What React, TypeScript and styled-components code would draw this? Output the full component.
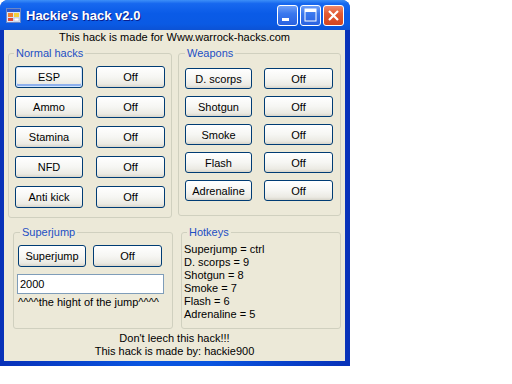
import { Fragment } from "react";
import styled, { createGlobalStyle } from "styled-components";

const GlobalStyle = createGlobalStyle`
  html, body {
    margin: 0;
    padding: 0;
    background: #ffffff;
  }
  body {
    font-family: "Liberation Sans", Arial, sans-serif;
    font-size: 11px;
    color: #000000;
  }
`;

const Window = styled.div`
  width: 350px;
  height: 366px;
  display: flex;
  flex-direction: column;
  border-radius: 8px 8px 0 0;
  overflow: hidden;
  background: #0a4fdc;
`;

const TitleBar = styled.div`
  height: 30px;
  flex: none;
  display: flex;
  align-items: center;
  padding: 0 6px 0 6px;
  background: linear-gradient(
    180deg,
    #3d8ff8 0%,
    #1768ef 12%,
    #0a5be7 45%,
    #0a5ae4 80%,
    #0c52d4 100%
  );
`;

const Title = styled.span`
  margin-left: 5px;
  font-family: "Liberation Sans", Arial, sans-serif;
  font-weight: bold;
  font-size: 13px;
  color: #ffffff;
  text-shadow: 1px 1px 0 #0a1e8c;
`;

const Caption = styled.div`
  margin-left: auto;
  display: flex;
  gap: 2px;
`;

const CaptionButton = styled.div<{ $close?: boolean }>`
  width: 21px;
  height: 21px;
  box-sizing: border-box;
  border: 1px solid #ffffff;
  border-radius: 3px;
  display: flex;
  align-items: center;
  justify-content: center;
  background: ${(p) =>
    p.$close
      ? "linear-gradient(180deg, #f08a6c 0%, #e25a33 40%, #d4451f 100%)"
      : "linear-gradient(180deg, #6f9ff7 0%, #3a78ee 40%, #2a62e0 100%)"};
`;

const Frame = styled.div`
  flex: 1;
  display: flex;
  padding: 0 5px 5px 4px;
  background: linear-gradient(90deg, #0831b8 0%, #0a55e0 40%, #0a55e0 60%, #0831b8 100%);
`;

const Client = styled.div`
  flex: 1;
  display: flex;
  flex-direction: column;
  background: #ece9d8;
  padding-top: 1px;
`;

const TopText = styled.div`
  text-align: center;
  line-height: 12px;
  height: 12px;
`;

const Row = styled.div<{ $top: number; $left: number; $gap: number }>`
  display: flex;
  align-items: flex-start;
  margin-top: ${(p) => p.$top}px;
  padding-left: ${(p) => p.$left}px;
  gap: ${(p) => p.$gap}px;
`;

const Group = styled.div<{ $w: number; $h: number }>`
  width: ${(p) => p.$w}px;
  height: ${(p) => p.$h}px;
  box-sizing: border-box;
  border: 1px solid #d0d0bf;
  border-radius: 3px;
  display: flex;
  flex-direction: column;
  align-items: flex-start;
`;

const Legend = styled.div<{ $x: number }>`
  margin: -7px 0 0 ${(p) => p.$x}px;
  padding: 0 2px;
  height: 13px;
  line-height: 13px;
  background: #ece9d8;
  color: #1d4fc4;
`;

const ButtonGrid = styled.div<{ $top: number; $left: number; $cols: string; $gap: number; $rowGap: number }>`
  display: grid;
  grid-template-columns: ${(p) => p.$cols};
  column-gap: ${(p) => p.$gap}px;
  row-gap: ${(p) => p.$rowGap}px;
  margin-top: ${(p) => p.$top}px;
  margin-left: ${(p) => p.$left}px;
`;

const XpButton = styled.button<{ $h: number; $focus?: boolean }>`
  height: ${(p) => p.$h}px;
  padding: 0;
  margin: 0;
  box-sizing: border-box;
  border: 1px solid #003c74;
  border-radius: 3px;
  font-family: "Liberation Sans", Arial, sans-serif;
  font-size: 11px;
  color: #000000;
  background: linear-gradient(180deg, #ffffff 0%, #f6f6f3 50%, #ebeae3 85%, #d8d5cb 100%);
  box-shadow: ${(p) =>
    p.$focus ? "inset 0 0 0 1px #cee3fc, inset 0 -2px 0 1px #8eb0ec" : "none"};
`;

const TextBox = styled.div`
  width: 147px;
  height: 20px;
  box-sizing: border-box;
  margin: 7px 0 0 3px;
  border: 1px solid #7f9db9;
  background: #ffffff;
  padding-left: 2px;
  line-height: 18px;
`;

const Hint = styled.div`
  margin: 2px 0 0 4px;
  line-height: 13px;
`;

const HotkeyList = styled.div`
  margin: 4px 0 0 2px;
  display: flex;
  flex-direction: column;
`;

const Line = styled.div`
  line-height: 13px;
  height: 13px;
`;

const Footer = styled.div`
  margin-top: 3px;
  text-align: center;
  line-height: 13px;
`;

const AppIcon = () => (
  <svg width="15" height="15" viewBox="0 0 15 15">
    <rect x="0.5" y="0.5" width="14" height="14" fill="#d8e4f8" stroke="#6d87c4" />
    <rect x="1" y="1" width="13" height="3" fill="#2c5bd0" />
    <rect x="2" y="5" width="5" height="4" fill="#f08030" />
    <rect x="8" y="5" width="5" height="4" fill="#f4d03c" />
    <rect x="2" y="10" width="5" height="3" fill="#e04838" />
    <rect x="8" y="10" width="5" height="3" fill="#ffffff" stroke="#9aa8c8" strokeWidth="0.5" />
  </svg>
);

const normalHacks = ["ESP", "Ammo", "Stamina", "NFD", "Anti kick"];
const weapons = ["D. scorps", "Shotgun", "Smoke", "Flash", "Adrenaline"];
const hotkeys = [
  "Superjump = ctrl",
  "D. scorps = 9",
  "Shotgun = 8",
  "Smoke = 7",
  "Flash = 6",
  "Adrenaline = 5",
];

const App = () => {
  return (
    <>
      <GlobalStyle />
      <Window>
        <TitleBar>
          <AppIcon />
          <Title>Hackie's hack v2.0</Title>
          <Caption>
            <CaptionButton>
              <svg width="19" height="19" viewBox="0 0 19 19">
                <rect x="4" y="12" width="7" height="3" fill="#ffffff" />
              </svg>
            </CaptionButton>
            <CaptionButton>
              <svg width="19" height="19" viewBox="0 0 19 19">
                <rect x="4" y="3" width="11" height="12" fill="none" stroke="#ffffff" strokeWidth="1" />
                <rect x="4" y="3" width="11" height="3" fill="#ffffff" />
              </svg>
            </CaptionButton>
            <CaptionButton $close>
              <svg width="19" height="19" viewBox="0 0 19 19">
                <path d="M5 5 L14 14 M14 5 L5 14" stroke="#ffffff" strokeWidth="2.2" />
              </svg>
            </CaptionButton>
          </Caption>
        </TitleBar>
        <Frame>
          <Client>
            <TopText>This hack is made for Www.warrock-hacks.com</TopText>
            <Row $top={10} $left={4} $gap={6}>
              <Group $w={164} $h={165}>
                <Legend $x={5}>Normal hacks</Legend>
                <ButtonGrid $top={6} $left={6} $cols="68px 69px" $gap={13} $rowGap={8}>
                  {normalHacks.map((name, i) => (
                    <Fragment key={name}>
                      <XpButton $h={22} $focus={i === 0}>
                        {name}
                      </XpButton>
                      <XpButton $h={22}>Off</XpButton>
                    </Fragment>
                  ))}
                </ButtonGrid>
              </Group>
              <Group $w={163} $h={163}>
                <Legend $x={6}>Weapons</Legend>
                <ButtonGrid $top={8} $left={6} $cols="67px 69px" $gap={12} $rowGap={7}>
                  {weapons.map((name) => (
                    <Fragment key={name}>
                      <XpButton $h={21}>{name}</XpButton>
                      <XpButton $h={21}>Off</XpButton>
                    </Fragment>
                  ))}
                </ButtonGrid>
              </Group>
            </Row>
            <Row $top={14} $left={9} $gap={8}>
              <Group $w={160} $h={97}>
                <Legend $x={6}>Superjump</Legend>
                <ButtonGrid $top={6} $left={4} $cols="68px 69px" $gap={7} $rowGap={0}>
                  <XpButton $h={22}>Superjump</XpButton>
                  <XpButton $h={22}>Off</XpButton>
                </ButtonGrid>
                <TextBox>2000</TextBox>
                <Hint>^^^^the hight of the jump^^^^</Hint>
              </Group>
              <Group $w={160} $h={97}>
                <Legend $x={5}>Hotkeys</Legend>
                <HotkeyList>
                  {hotkeys.map((h) => (
                    <Line key={h}>{h}</Line>
                  ))}
                </HotkeyList>
              </Group>
            </Row>
            <Footer>
              Don't leech this hack!!!
              <br />
              This hack is made by: hackie900
            </Footer>
          </Client>
        </Frame>
      </Window>
    </>
  );
};

export default App;
